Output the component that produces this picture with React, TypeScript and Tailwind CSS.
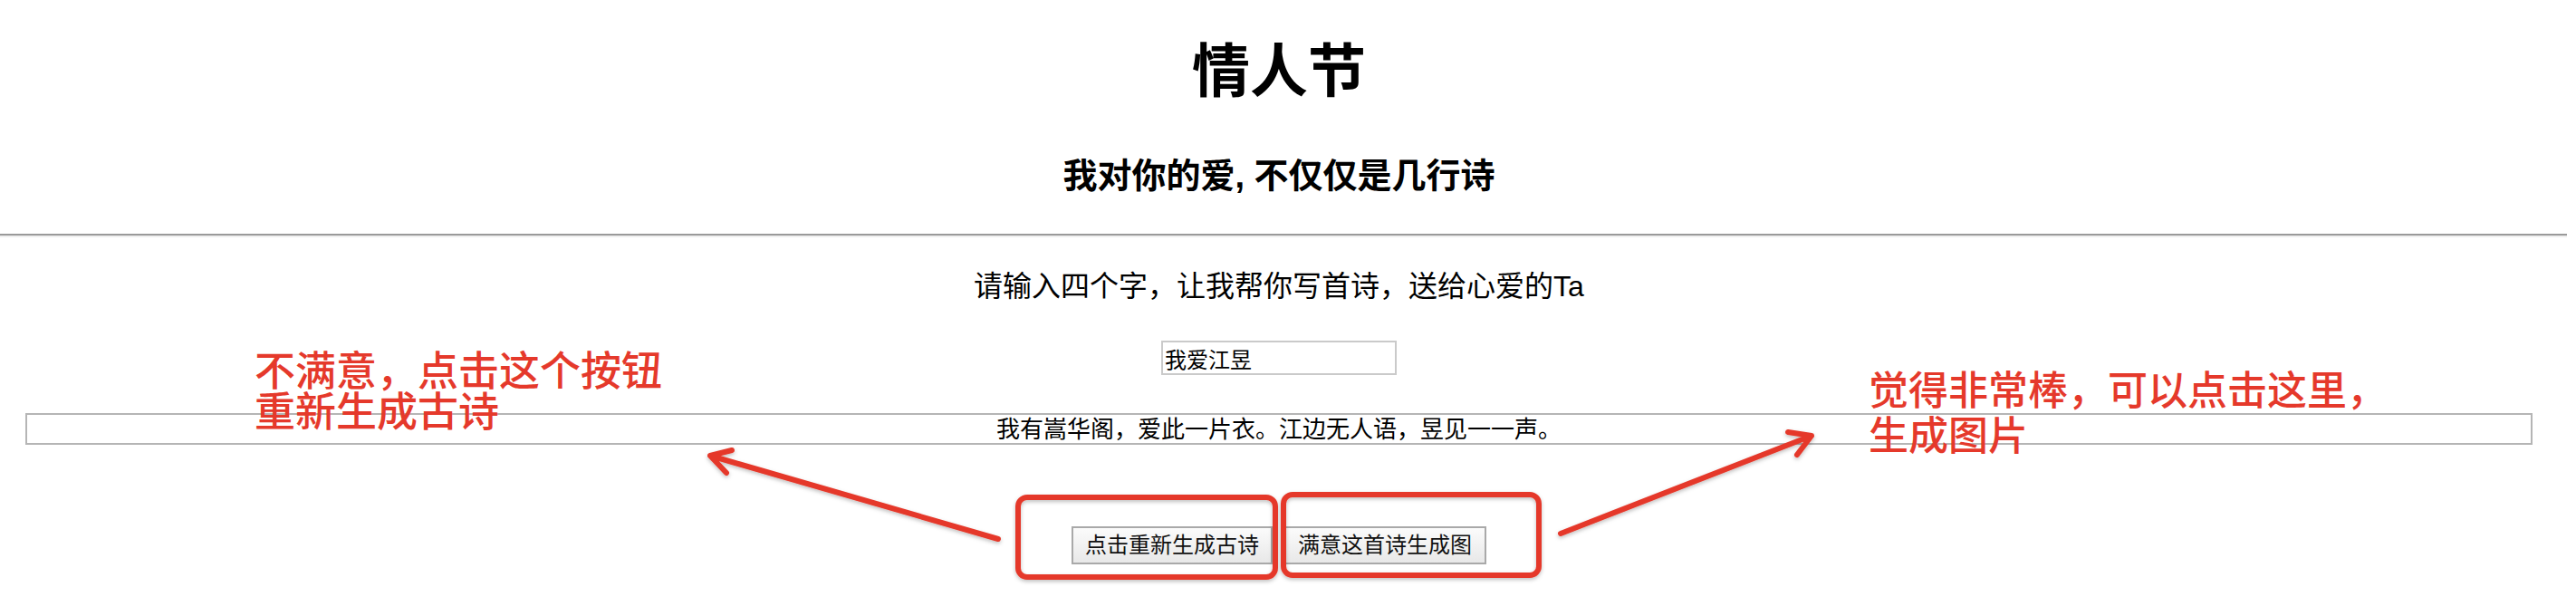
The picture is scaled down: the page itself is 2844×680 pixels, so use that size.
import React from 'react';

const RED = '#e5392b';

const Annotations: React.FC = () => {
  return (
    <>
      {/* red boxes + arrows drawn over the page */}
      <svg
        className="pointer-events-none absolute left-0 top-0"
        width={2844}
        height={680}
        viewBox="0 0 2844 680"
      >
        <defs>
          <filter id="shadow" x="-10%" y="-10%" width="120%" height="130%">
            <feDropShadow dx="0" dy="2" stdDeviation="2" floodColor="#000" floodOpacity="0.25" />
          </filter>
        </defs>
        <g fill="none" stroke={RED} strokeWidth={6} strokeLinecap="round" strokeLinejoin="round" filter="url(#shadow)">
          <rect x={1124} y={549} width={284} height={88} rx={10} />
          <rect x={1417} y={546} width={282} height={89} rx={10} />
          {/* left arrow */}
          <path d="M1102 595 L784 503 M808 497 L784 503 L802 522" />
          {/* right arrow */}
          <path d="M1723 589 L2000 481 M1974 477 L2000 481 L1984 502" />
        </g>
      </svg>

      <div
        className="absolute left-[281px] top-[388px] text-[45px] leading-[45px] font-medium"
        style={{ color: RED }}
      >
        <div>不满意，点击这个按钮</div>
        <div>重新生成古诗</div>
      </div>

      <div
        className="absolute left-[2063px] top-[407px] text-[44px] leading-[50px] font-medium"
        style={{ color: RED }}
      >
        <div>觉得非常棒，可以点击这里，</div>
        <div>生成图片</div>
      </div>
    </>
  );
};

const App: React.FC = () => {
  return (
    <div className="relative h-[680px] w-[2844px] overflow-hidden bg-white text-black font-['Liberation_Sans','Noto_Sans_CJK_SC',sans-serif]">
      <main className="flex w-[2824px] flex-col items-center">
        <h1 className="mt-[47px] text-[64px] leading-[64px] font-bold">情人节</h1>
        <h3 className="mt-[64px] text-[38px] leading-[38px] font-bold">我对你的爱, 不仅仅是几行诗</h3>

        <div className="mt-[45px] h-[4px] w-[2834px] self-start border-t-2 border-b-2 border-t-[#9a9a9a] border-b-[#efefef]" />

        <p className="mt-[38px] text-[32px] leading-[32px]">请输入四个字，让我帮你写首诗，送给心爱的Ta</p>

        <input
          className="mt-[44px] h-[38px] w-[260px] border-2 border-[#cacaca] px-[2px] text-[24px] text-black outline-none"
          defaultValue="我爱江昱"
        />

        <div className="mt-[42px] flex h-[35px] w-[2768px] items-center justify-center border-2 border-[#b5b5b5] text-[26px] leading-none">
          我有嵩华阁，爱此一片衣。江边无人语，昱见一一声。
        </div>

        <div className="mt-[90px] flex gap-[12px]">
          <button className="h-[42px] w-[222px] border-2 border-[#a9a9a9] bg-gradient-to-b from-[#fbfbfb] to-[#e8e8e8] text-[24px] leading-none text-[#111]">
            点击重新生成古诗
          </button>
          <button className="h-[42px] w-[224px] border-2 border-[#a9a9a9] bg-gradient-to-b from-[#fbfbfb] to-[#e8e8e8] text-[24px] leading-none text-[#111]">
            满意这首诗生成图
          </button>
        </div>
      </main>

      <Annotations />
    </div>
  );
};

export default App;
